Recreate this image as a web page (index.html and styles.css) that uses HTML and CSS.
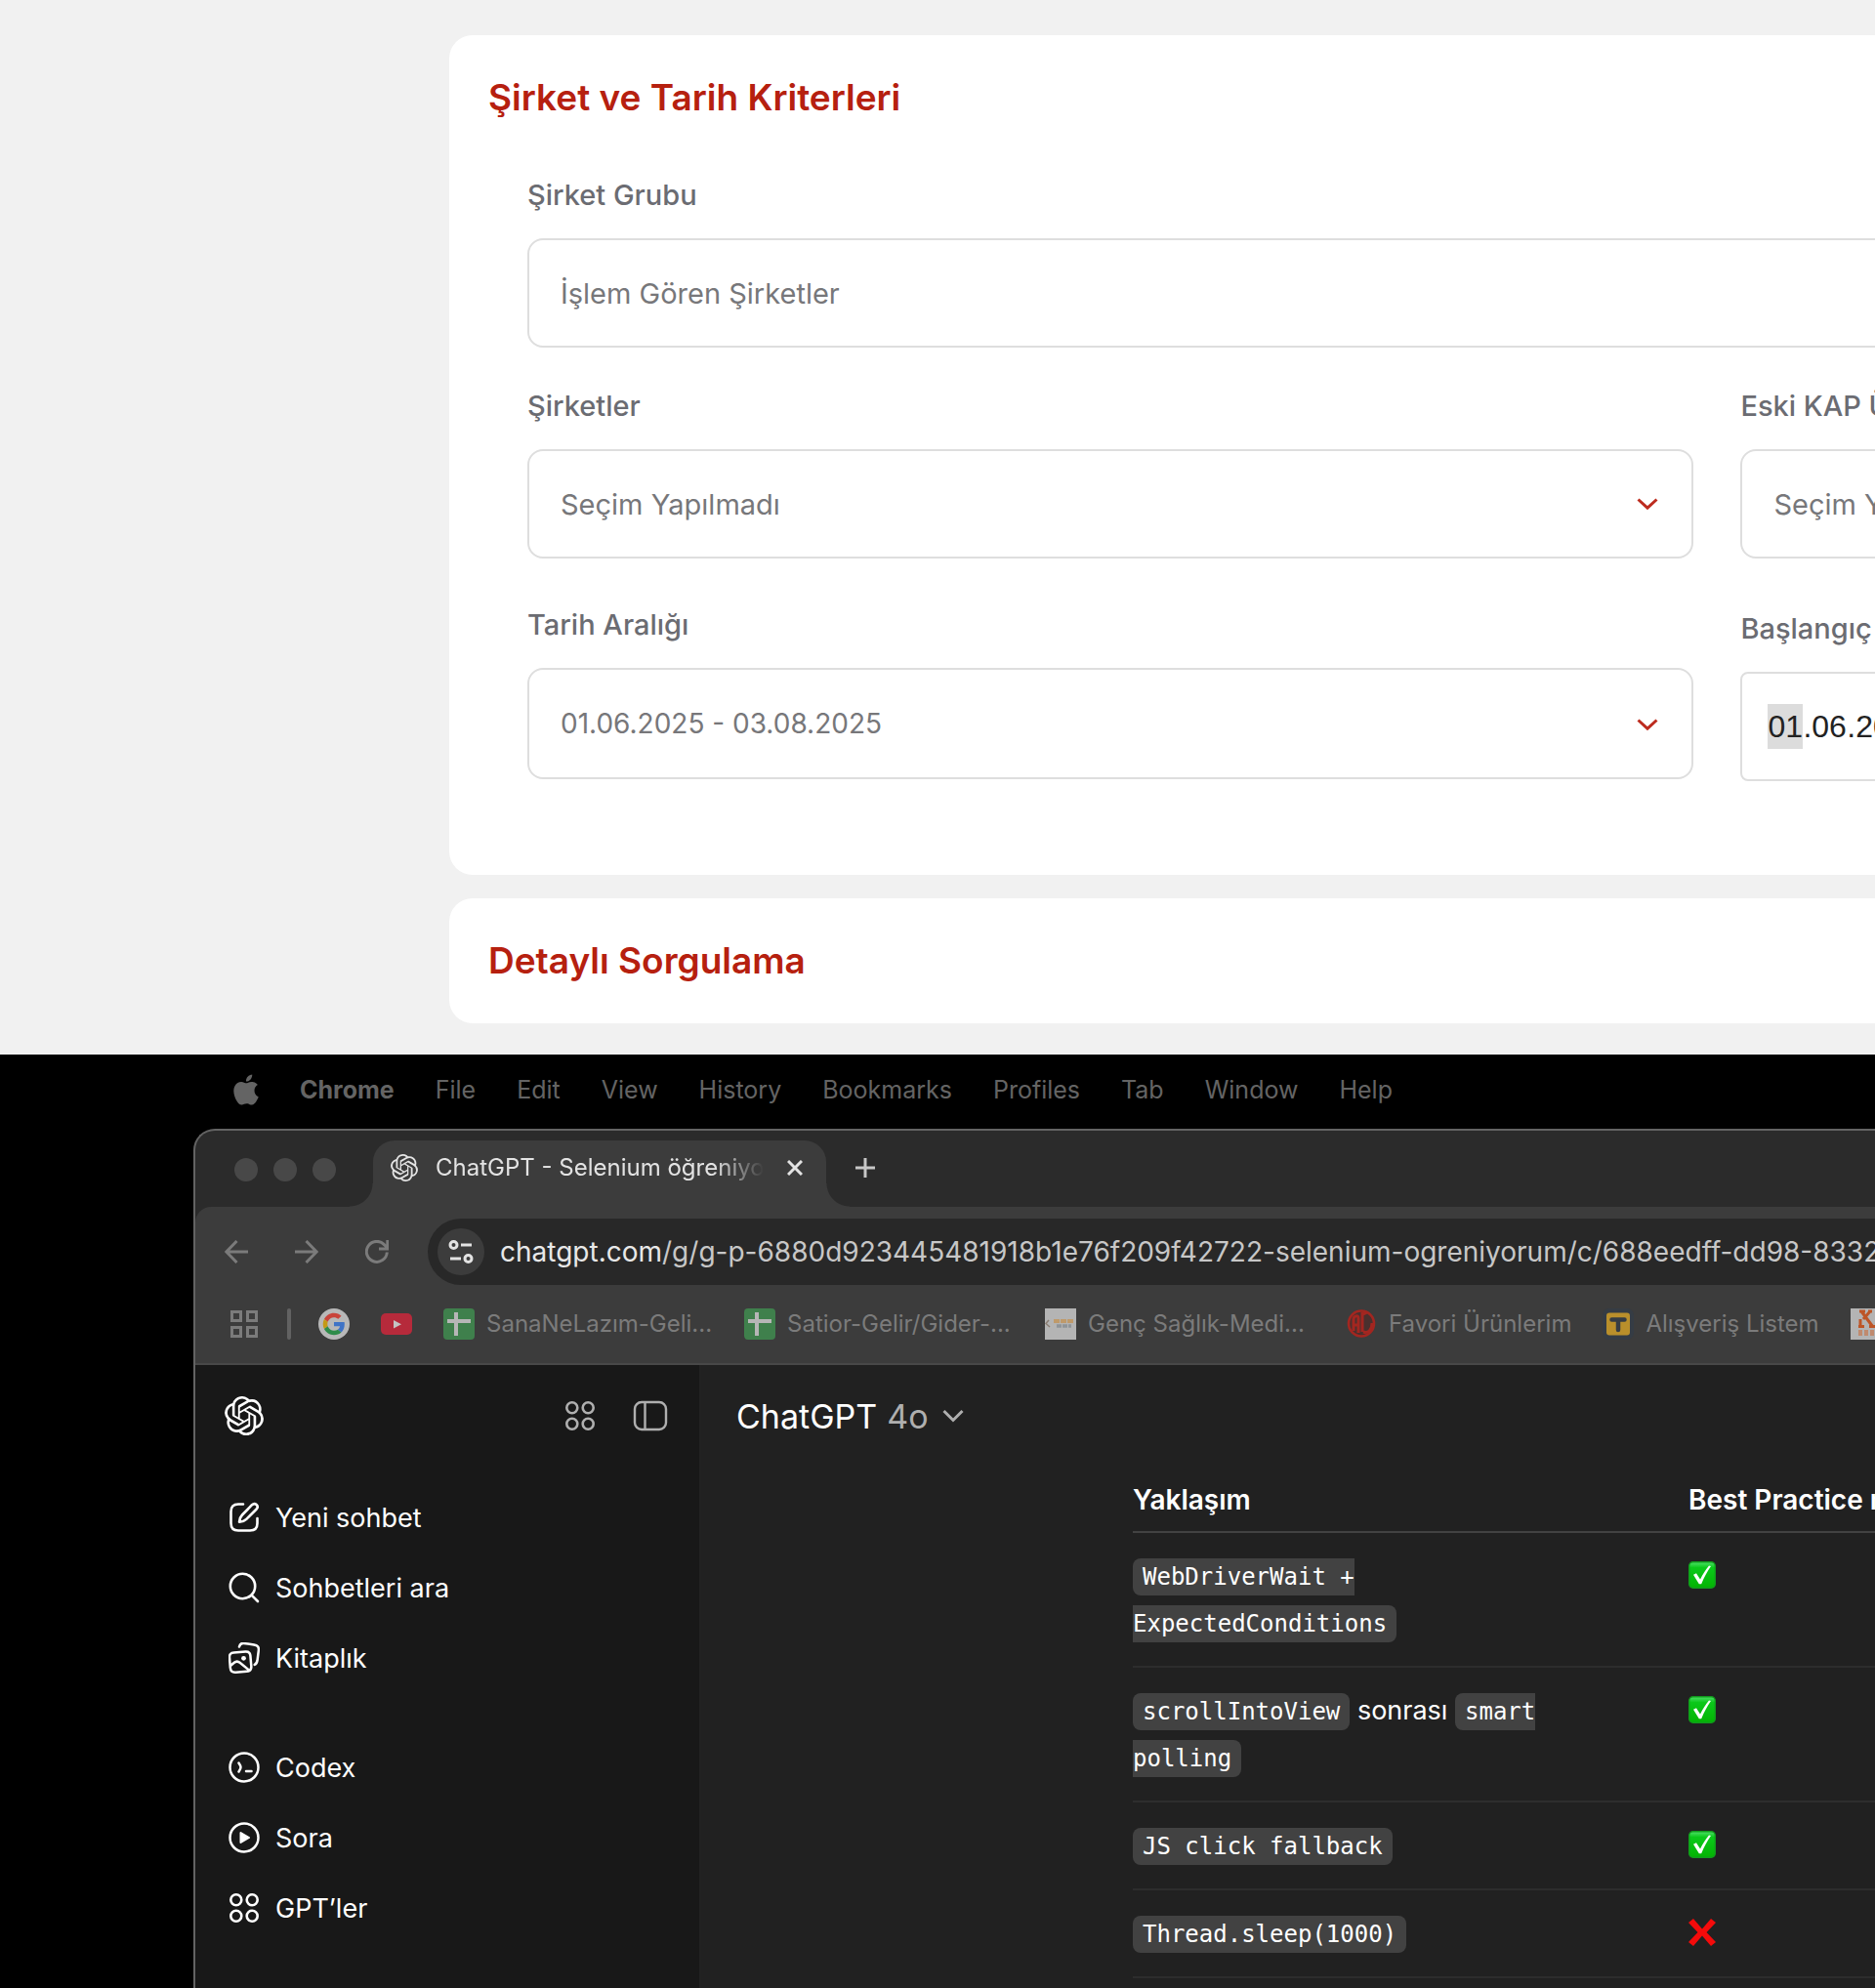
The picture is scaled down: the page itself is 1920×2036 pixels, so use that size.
FILE: index.html
```html
<!DOCTYPE html>
<html lang="tr">
<head>
<meta charset="utf-8">
<title>Şirket ve Tarih Kriterleri</title>
<link rel="stylesheet" href="styles.css">
</head>
<body>
<svg class="defs" aria-hidden="true">
  <symbol id="openai" viewBox="0 0 24 24"><path d="M22.2819 9.8211a5.9847 5.9847 0 0 0-.5157-4.9108 6.0462 6.0462 0 0 0-6.5098-2.9A6.0651 6.0651 0 0 0 4.9807 4.1818a5.9847 5.9847 0 0 0-3.9977 2.9 6.0462 6.0462 0 0 0 .7427 7.0966 5.98 5.98 0 0 0 .511 4.9107 6.051 6.051 0 0 0 6.5146 2.9001A5.9847 5.9847 0 0 0 13.2599 24a6.0557 6.0557 0 0 0 5.7718-4.2058 5.9894 5.9894 0 0 0 3.9977-2.9001 6.0557 6.0557 0 0 0-.7475-7.0729zm-9.022 12.6081a4.4755 4.4755 0 0 1-2.8764-1.0408l.1419-.0804 4.7783-2.7582a.7948.7948 0 0 0 .3927-.6813v-6.7369l2.02 1.1686a.071.071 0 0 1 .038.052v5.5826a4.504 4.504 0 0 1-4.4945 4.4944zm-9.6607-4.1254a4.4708 4.4708 0 0 1-.5346-3.0137l.142.0852 4.783 2.7582a.7712.7712 0 0 0 .7806 0l5.8428-3.3685v2.3324a.0804.0804 0 0 1-.0332.0615L9.74 19.9502a4.4992 4.4992 0 0 1-6.1408-1.6464zM2.3408 7.8956a4.485 4.485 0 0 1 2.3655-1.9728V11.6a.7664.7664 0 0 0 .3879.6765l5.8144 3.3543-2.0201 1.1685a.0757.0757 0 0 1-.071 0l-4.8303-2.7865A4.504 4.504 0 0 1 2.3408 7.872zm16.5963 3.8558L13.1038 8.364 15.1192 7.2a.0757.0757 0 0 1 .071 0l4.8303 2.7913a4.4944 4.4944 0 0 1-.6765 8.1042v-5.6772a.79.79 0 0 0-.407-.667zm2.0107-3.0231l-.142-.0852-4.7735-2.7818a.7759.7759 0 0 0-.7854 0L9.409 9.2297V6.8974a.0662.0662 0 0 1 .0284-.0615l4.8303-2.7866a4.4992 4.4992 0 0 1 6.6802 4.66zM8.3065 12.863l-2.02-1.1638a.0804.0804 0 0 1-.038-.0567V6.0742a4.4992 4.4992 0 0 1 7.3757-3.4537l-.142.0805L8.704 5.459a.7948.7948 0 0 0-.3927.6813zm1.0976-2.3654l2.602-1.4998 2.6069 1.4998v2.9994l-2.5974 1.4997-2.6067-1.4997Z" fill="currentColor"/></symbol>
  <symbol id="circles" viewBox="0 0 32 32"><g fill="none" stroke="currentColor" stroke-width="2.6"><circle cx="7.8" cy="7.8" r="5.5"/><circle cx="24.2" cy="7.8" r="5.5"/><circle cx="7.8" cy="24.2" r="5.5"/><circle cx="24.2" cy="24.2" r="5.5"/></g></symbol>
  <symbol id="sheet" viewBox="0 0 32 32"><rect width="32" height="32" rx="4" fill="#3f804c"/><path d="M4 11h24v4H4zM11 4h4v24h-4z" fill="#b6b6b6"/></symbol>
  <symbol id="check" viewBox="0 0 28 28"><linearGradient id="green" x1="0" y1="0" x2="0" y2="1"><stop offset="0" stop-color="#4fe06a"/><stop offset=".22" stop-color="#0bc81a"/><stop offset="1" stop-color="#03b303"/></linearGradient><rect x=".7" y=".7" width="26.600" height="26.600" rx="4" fill="url(#green)" stroke="#119c1c" stroke-width="1.400"/><path d="M5 13.800l3-1.600 4 6.300C14.500 13.500 17.500 8.800 21 4.600l2 .4c-4 5.600-7 11.400-9.800 18.200h-2.400z" fill="#fff"/></symbol>
  <symbol id="cross" viewBox="0 0 28 28"><path d="M5 0l9 10.500L23 0l5 4-9.500 10L28 24l-5 4-9-10.500L5 28l-5-4 9.500-10L0 4z" fill="#f40b0b"/></symbol>
</svg>

<section class="query">
  <form class="panels">
    <fieldset class="panel">
      <h2 class="panel-title">Şirket ve Tarih Kriterleri</h2>
      <div class="fields">
        <div class="field field-wide">
          <label for="group">Şirket Grubu</label>
          <select id="group" class="control"><option>İşlem Gören Şirketler</option></select>
        </div>
        <div class="field">
          <label for="companies">Şirketler</label>
          <div class="picker">
            <select id="companies" class="control"><option>Seçim Yapılmadı</option></select>
            <svg class="caret" viewBox="0 0 22 12"><path d="M1.500 1.500L11 10.200l9.500-8.700"/></svg>
          </div>
        </div>
        <div class="field">
          <label for="old-members">Eski KAP Üyeleri</label>
          <div class="picker">
            <select id="old-members" class="control"><option>Seçim Yapılmadı</option></select>
            <svg class="caret" viewBox="0 0 22 12"><path d="M1.500 1.500L11 10.200l9.500-8.700"/></svg>
          </div>
        </div>
        <div class="field field-range">
          <label for="range">Tarih Aralığı</label>
          <div class="picker">
            <select id="range" class="control control-range"><option>01.06.2025 - 03.08.2025</option></select>
            <svg class="caret" viewBox="0 0 22 12"><path d="M1.500 1.500L11 10.200l9.500-8.700"/></svg>
          </div>
        </div>
        <div class="field field-start">
          <label for="day">Başlangıç Tarihi</label>
          <div class="date-box">
            <input id="day" class="segment segment-active" value="01" aria-label="Gün"><span>.</span><input class="segment" value="06" aria-label="Ay"><span>.</span><input class="segment segment-year" value="2025" aria-label="Yıl">
          </div>
        </div>
      </div>
    </fieldset>
    <section class="panel panel-closed">
      <h2 class="panel-title">Detaylı Sorgulama</h2>
    </section>
  </form>
</section>

<section class="desktop">
  <nav class="menubar">
    <svg class="apple" viewBox="2 0 20 24"><path fill="currentColor" d="M12.152 6.896c-.948 0-2.415-1.078-3.96-1.04-2.04.027-3.91 1.183-4.961 3.014-2.117 3.675-.546 9.103 1.519 12.09 1.013 1.454 2.208 3.09 3.792 3.039 1.52-.065 2.09-.987 3.935-.987 1.831 0 2.35.987 3.96.948 1.637-.026 2.676-1.48 3.676-2.948 1.156-1.688 1.636-3.325 1.662-3.415-.039-.013-3.182-1.221-3.22-4.857-.026-3.04 2.48-4.494 2.597-4.559-1.429-2.09-3.623-2.324-4.39-2.376-2-.156-3.675 1.090-4.610 1.090zM15.530 3.830c.843-1.012 1.400-2.427 1.245-3.830-1.207.052-2.662.805-3.532 1.818-.78.896-1.454 2.338-1.273 3.714 1.338.104 2.715-.688 3.559-1.701"/></svg>
    <button class="menu menu-app">Chrome</button>
    <button class="menu">File</button>
    <button class="menu">Edit</button>
    <button class="menu">View</button>
    <button class="menu">History</button>
    <button class="menu">Bookmarks</button>
    <button class="menu">Profiles</button>
    <button class="menu">Tab</button>
    <button class="menu">Window</button>
    <button class="menu">Help</button>
  </nav>

  <div class="window">
    <header class="tabstrip">
      <div class="lights"><i></i><i></i><i></i></div>
      <div class="tab">
        <svg class="tab-icon"><use href="#openai"/></svg>
        <span class="tab-title">ChatGPT - Selenium öğreniyorum</span>
        <button class="tab-close" aria-label="Sekmeyi kapat"><svg viewBox="0 0 16 16"><path d="M1 1l14 14M15 1L1 15"/></svg></button>
      </div>
      <button class="tab-new" aria-label="Yeni sekme"><svg viewBox="0 0 20 20"><path d="M10 0v20M0 10h20"/></svg></button>
    </header>

    <div class="chrome">
      <div class="toolbar">
        <button class="nav" aria-label="Geri"><svg viewBox="0 0 24 24"><path d="M24 12H2M12.500 1L1.800 12l10.700 11"/></svg></button>
        <button class="nav" aria-label="İleri"><svg viewBox="0 0 24 24"><path d="M0 12h22M11.500 1l10.700 11-10.700 11"/></svg></button>
        <button class="nav" aria-label="Yenile"><svg viewBox="0 0 24 24"><path d="M22.300 12.500A10.500 10.500 0 1 1 20 5.300L23 8.500M22.800 0v9H14"/></svg></button>
        <div class="omnibox">
          <button class="site" aria-label="Site bilgileri"><svg viewBox="0 0 26 24"><g fill="none" stroke="currentColor" stroke-width="3"><circle cx="5.500" cy="5" r="3.500"/><path d="M13 5h11M2 19h11"/><circle cx="20.500" cy="19" r="3.500"/></g></svg></button>
          <span class="url"><b>chatgpt.com</b>/g/g-p-6880d923445481918b1e76f209f42722-selenium-ogreniyorum/c/688eedff-dd98-8332-b1d5</span>
        </div>
      </div>

      <nav class="bookmarks">
        <button class="apps" aria-label="Uygulamalar"><svg viewBox="0 0 28 28"><path d="M1.500 1.500h9v9h-9zM17.500 1.500h9v9h-9zM1.500 17.500h9v9h-9zM17.500 17.500h9v9h-9z"/></svg></button>
        <span class="rule"></span>
        <a class="mark" href="#" aria-label="Google"><svg viewBox="-10 -10 68 68"><circle cx="24" cy="24" r="34" fill="#b8b8b8"/><path fill="#c9443b" d="M24 9.500c3.540 0 6.710 1.220 9.210 3.600l6.850-6.850C35.900 2.380 30.470 0 24 0 14.620 0 6.510 5.380 2.560 13.220l7.980 6.190C12.430 13.720 17.740 9.500 24 9.500z"/><path fill="#3f73c6" d="M46.980 24.550c0-1.570-.15-3.090-.38-4.550H24v9.020h12.940c-.58 2.960-2.260 5.480-4.780 7.180l7.730 6c4.510-4.180 7.090-10.360 7.090-17.650z"/><path fill="#c49a16" d="M10.530 28.590c-.48-1.450-.76-2.990-.76-4.590s.27-3.140.76-4.590l-7.980-6.190C.92 16.460 0 20.120 0 24c0 3.880.92 7.540 2.560 10.780z"/><path fill="#2f8c4a" d="M24 48c6.480 0 11.930-2.130 15.890-5.810l-7.730-6c-2.150 1.450-4.920 2.300-8.160 2.300-6.260 0-11.570-4.220-13.470-9.910l-7.980 6.190C6.510 42.620 14.620 48 24 48z"/></svg></a>
        <a class="mark" href="#" aria-label="YouTube"><svg viewBox="0 0 32 32"><rect y="5" width="32" height="22" rx="5" fill="#b62a3b"/><path d="M13 12v8.500l8-4.200z" fill="#c4c4c4"/></svg></a>
        <a class="mark mark-cut" href="#"><svg><use href="#sheet"/></svg>SanaNeLazım-Geli...</a>
        <a class="mark mark-cut" href="#"><svg><use href="#sheet"/></svg>Satior-Gelir/Gider-...</a>
        <a class="mark mark-cut" href="#"><svg viewBox="0 0 32 32"><path fill="#b4b4b4" d="M0 0h32v32H0z"/><path d="M4 12l-3 3.500 4 3.500" fill="none" stroke="#8a7d72" stroke-width="1.500"/><path d="M9 13h21" stroke="#bf9a6a" stroke-width="4" stroke-dasharray="6 1"/><path d="M12 18h15" stroke="#8f9498" stroke-width="3.500" stroke-dasharray="5 1"/></svg>Genç Sağlık-Medi...</a>
        <a class="mark" href="#"><svg viewBox="0 0 32 32"><circle cx="16" cy="15.500" r="13" fill="#4a302e" stroke="#a32620" stroke-width="2.600"/><g fill="none" stroke="#a32620" stroke-width="3"><path d="M8 23V11c0-3 5-5 5-1v15M8 17h5M17 4v20M22 4l-4 2M18 24c5 2 9-2 9-9"/></g></svg>Favori Ürünlerim</a>
        <a class="mark" href="#"><svg viewBox="0 0 32 32"><rect width="32" height="32" rx="7" fill="#353c44"/><rect x="4" y="4.500" width="24" height="23" rx="3" fill="#b98f2b"/><path d="M9.500 11.500h13M16 12v10" stroke="#353c44" stroke-width="4.500" stroke-linecap="round"/></svg>Alışveriş Listem</a>
        <a class="mark" href="#" aria-label="K"><svg viewBox="0 0 32 32"><path fill="#b4b4b4" d="M0 0h32v32H0z"/><path d="M9 3h6M11 3l12 16M22 3h-4M20 3l-7 8M10 11v8M8 18.500h6M19 18.500h7" fill="none" stroke="#bd5526" stroke-width="3"/><path d="M8 25h21" stroke="#c08a6e" stroke-width="6" stroke-dasharray="4 2"/></svg></a>
      </nav>
    </div>

    <div class="app">
      <aside class="sidebar">
        <div class="side-head">
          <svg class="logo"><use href="#openai"/></svg>
          <button class="tool" aria-label="Uygulamalar"><svg><use href="#circles"/></svg></button>
          <button class="tool" aria-label="Kenar çubuğu"><svg viewBox="0 0 32 32"><g fill="none" stroke="currentColor" stroke-width="2.400"><rect x="0" y="2" width="32" height="28" rx="7"/><path d="M10.500 2v28"/></g></svg></button>
        </div>
        <nav class="links">
          <a href="#"><svg viewBox="0 0 32 32"><g fill="none" stroke="currentColor" stroke-width="2.600" stroke-linecap="round" stroke-linejoin="round"><path d="M15 2.500h-5c-5 0-7.500 2.500-7.500 7.500v12c0 5 2.500 7.500 7.500 7.500h12c5 0 7.500-2.500 7.500-7.500v-5"/><path d="M24 3.200L14 13.500c-2 2-2.800 4.500-3 7.300 2.800-.2 5.300-1 7.300-3L28.700 7.500c2.800-3.200-1.500-7.300-4.700-4.300z"/></g></svg>Yeni sohbet</a>
          <a href="#"><svg viewBox="0 0 32 32"><g fill="none" stroke="currentColor" stroke-width="2.600" stroke-linecap="round"><circle cx="14.500" cy="14.500" r="12.700"/><path d="M23.800 23.800l6.200 6.200"/></g></svg>Sohbetleri ara</a>
          <a href="#"><svg viewBox="0 0 32 32"><g fill="none" stroke="currentColor" stroke-width="2.500" stroke-linecap="round" stroke-linejoin="round"><path d="M11 4.500c.5-2.500 2-3.800 4.600-3.500l10.500 1.400c3.600.5 5.200 2.500 4.700 6l-1.200 9.600c-.3 2.400-1.100 4-2.900 4.900"/><path d="M5.400 10.500l12-1c3-.2 4.700 1.200 5 4.200l.9 10.600c.3 3.400-1.300 5.200-4.600 5.500l-11.300.9c-3.500.3-5.300-1.300-5.600-4.700L1 15.700c-.3-3.200 1.200-5 4.400-5.200zM2 24l3.800-3.200c1.800-1.500 4-1.500 5.800 0l9.600 7.800"/></g><circle cx="15.500" cy="16.300" r="2.400" fill="currentColor"/></svg>Kitaplık</a>
        </nav>
        <nav class="links">
          <a href="#"><svg viewBox="0 0 32 32"><g fill="none" stroke="currentColor" stroke-width="2.500" stroke-linecap="round" stroke-linejoin="round"><circle cx="16" cy="16" r="14.500"/><path d="M10.500 11.500c1 1.500 2 3 2 4.500s-1 3-2 4.500M18 20h5.500"/></g></svg>Codex</a>
          <a href="#"><svg viewBox="0 0 32 32"><circle cx="16" cy="16" r="14.500" fill="none" stroke="currentColor" stroke-width="2.500"/><path d="M12.500 11v10l8.500-5z" fill="currentColor" stroke="currentColor" stroke-width="2" stroke-linejoin="round"/></svg>Sora</a>
          <a href="#"><svg><use href="#circles"/></svg>GPT’ler</a>
        </nav>
      </aside>

      <main class="chat">
        <button class="model">ChatGPT <span>4o</span><svg viewBox="0 0 22 14"><path d="M1.500 2L11 11.500 20.500 2"/></svg></button>
        <table class="practices">
          <thead><tr><th>Yaklaşım</th><th>Best Practice mi?</th></tr></thead>
          <tbody>
            <tr><td><code>WebDriverWait +<br>ExpectedConditions</code></td><td><svg role="img" aria-label="Evet"><use href="#check"/></svg></td></tr>
            <tr><td><code>scrollIntoView</code> sonrası <code>smart<br>polling</code></td><td><svg role="img" aria-label="Evet"><use href="#check"/></svg></td></tr>
            <tr><td><code>JS click fallback</code></td><td><svg role="img" aria-label="Evet"><use href="#check"/></svg></td></tr>
            <tr><td><code>Thread.sleep(1000)</code></td><td><svg role="img" aria-label="Hayır"><use href="#cross"/></svg></td></tr>
          </tbody>
        </table>
      </main>
    </div>
  </div>
</section>
</body>
</html>
```
FILE: styles.css
```css
* { box-sizing: border-box; }

body {
  margin: 0;
  min-height: 100vh;
  display: flex;
  flex-direction: column;
  overflow: hidden;
  font-family: Inter, "Liberation Sans", sans-serif;
  background: #000;
}

button, input, select { font: inherit; color: inherit; }
button { padding: 0; border: 0; background: none; text-align: left; }
a { color: inherit; text-decoration: none; }
svg { display: block; flex: none; }
.defs { position: absolute; width: 0; height: 0; }

/* Query form */
.query { background: #f1f1f1; padding: 36px 0 32px 460px; overflow: hidden; }
.panels { width: 178%; display: flex; flex-direction: column; gap: 24px; }
.panel {
  margin: 0;
  min-width: 0;
  border: 0;
  border-radius: 24px;
  background: #fff;
  padding: 40px 82px 96px 80px;
}
.panel-closed { padding-bottom: 40px; }
.panel-title {
  margin: 0 0 0 -40px;
  font-size: 37px;
  font-weight: 600;
  line-height: 48px;
  color: #b6200f;
}
.fields {
  display: grid;
  grid-template-columns: 1fr 1fr;
  column-gap: 48px;
  padding-top: 56px;
}
.field { display: flex; flex-direction: column; gap: 24px; margin-bottom: 40px; }
.field-wide { grid-column: span 2; }
.field-range, .field-start { margin-bottom: 0; }
.field-range { padding-top: 8px; }
.field-start { padding-top: 12px; }
.field label { font-size: 29px; font-weight: 500; line-height: 40px; color: #6b6c72; }
.picker { position: relative; }
.control {
  display: block;
  width: 100%;
  height: 112px;
  padding: 0 32px;
  border: 2px solid #dedede;
  border-radius: 16px;
  background: #fff;
  appearance: none;
  font-size: 29px;
  color: #77777a;
  opacity: 1;
}
.control-range { height: 114px; font-size: 28px; }
.caret { position: absolute; right: 36px; top: 50px; width: 22px; height: 12px; fill: none; stroke: #bd2c1f; stroke-width: 3; }
.field-range .caret { top: 52px; }
.date-box {
  display: flex;
  align-items: center;
  height: 112px;
  padding: 0 26px;
  border: 2px solid #dedede;
  border-radius: 8px;
  font-family: "Liberation Sans", Arial, sans-serif;
  font-size: 32px;
  color: #222;
}
.segment { width: 36px; height: 46px; padding: 0; border: 0; background: none; }
.segment-active { background: #dcdcdc; }
.segment-year { width: 72px; }

/* Desktop */
.desktop { flex: 1; display: flex; flex-direction: column; background: #000; overflow: hidden; }
.menubar {
  display: flex;
  align-items: center;
  gap: 42px;
  height: 76px;
  padding: 0 0 4px 239px;
  font-size: 25px;
  color: #646464;
}
.apple { width: 26px; height: 32px; }
.menu-app { font-weight: 700; }

.window {
  flex: 1;
  display: flex;
  flex-direction: column;
  margin-left: 198px;
  border: 2px solid #636363;
  border-width: 2px 0 0 2px;
  border-top-left-radius: 22px;
  overflow: hidden;
  background: #2b2b2b;
}
.tabstrip { display: flex; align-items: center; height: 78px; padding: 10px 0 0 40px; }
.lights { display: flex; gap: 16px; width: 142px; height: 32px; }
.lights i { width: 24px; height: 24px; border-radius: 50%; background: #484848; }
.tab {
  position: relative;
  display: flex;
  align-items: center;
  width: 464px;
  height: 68px;
  padding: 0 24px 12px 18px;
  border-radius: 22px 22px 0 0;
  background: #3c3c3c;
  color: #e3e3e3;
}
.tab::before, .tab::after { content: ""; position: absolute; bottom: 0; width: 24px; height: 24px; }
.tab::before { left: -24px; background: radial-gradient(circle at 0 0, #2b2b2b 23px, #3c3c3c 24px); }
.tab::after { right: -24px; background: radial-gradient(circle at 100% 0, #2b2b2b 23px, #3c3c3c 24px); }
.tab-icon { width: 28px; height: 28px; margin-right: 18px; }
.tab-title {
  flex: 1;
  margin-right: 24px;
  overflow: hidden;
  white-space: nowrap;
  font-size: 24px;
  line-height: 32px;
  mask-image: linear-gradient(90deg, #000 85%, transparent);
}
.tab-close svg { width: 16px; height: 16px; }
.tab-new { margin: 0 0 12px 30px; color: #c7c7c7; }
.tab-new svg { width: 20px; height: 20px; }
.tab-close svg, .tab-new svg { fill: none; stroke: currentColor; stroke-width: 3; }

.chrome { background: #3c3c3c; border-top-left-radius: 16px; border-bottom: 2px solid #484848; }
.toolbar { display: flex; align-items: center; gap: 48px; height: 92px; padding-left: 30px; color: #7b7b7b; }
.nav svg { width: 24px; height: 24px; fill: none; stroke: currentColor; stroke-width: 3; }
.omnibox {
  flex: 1;
  display: flex;
  align-items: center;
  gap: 16px;
  min-width: 0;
  height: 68px;
  margin-left: -8px;
  padding-left: 10px;
  border-radius: 34px 0 0 34px;
  background: #282828;
  overflow: hidden;
}
.site { display: grid; place-items: center; flex: none; width: 48px; height: 48px; border-radius: 50%; background: #3c3c3c; color: #e3e3e3; }
.site svg { width: 26px; height: 24px; }
.url { white-space: nowrap; font-size: 28px; line-height: 36px; color: #c7c7c7; }
.url b { font-weight: 400; color: #e8e8e8; }

.bookmarks { display: flex; align-items: center; height: 68px; padding: 0 0 12px 36px; color: #7b7b7b; overflow: hidden; }
.apps svg { width: 28px; height: 28px; fill: none; stroke: currentColor; stroke-width: 3; }
.rule { flex: none; width: 4px; height: 32px; margin: 0 28px 0 30px; border-radius: 2px; background: #626262; }
.mark { flex: none; display: flex; align-items: center; gap: 12px; margin-right: 32px; font-size: 24px; line-height: 32px; white-space: nowrap; }
.mark svg { width: 32px; height: 32px; }
.mark-cut { width: 276px; }

.app { flex: 1; display: flex; background: #212121; color: #fff; }
.sidebar { flex: none; width: 518px; background: #181818; border-right: 2px solid #222; }
.side-head { display: flex; align-items: center; gap: 40px; height: 104px; padding: 0 34px 0 30px; color: #afafaf; }
.logo { width: 40px; height: 40px; margin-right: auto; color: #fff; }
.tool svg { width: 32px; height: 32px; overflow: visible; }
.links { display: flex; flex-direction: column; padding: 16px 0 0 34px; }
.links + .links { padding-top: 40px; }
.links a { display: flex; align-items: center; gap: 16px; height: 72px; font-size: 27px; }
.links svg { width: 32px; height: 32px; }

.chat { flex: 1; min-width: 0; overflow: hidden; }
.model { display: flex; align-items: center; gap: 10px; height: 104px; padding-left: 36px; font-size: 34px; }
.model span { color: #afafaf; }
.model svg { width: 22px; height: 14px; margin-left: 4px; fill: none; stroke: #afafaf; stroke-width: 3; }
.practices { width: 1280px; margin-left: 442px; border-collapse: separate; border-spacing: 0; table-layout: fixed; font-size: 27px; line-height: 48px; }
.practices th { padding: 10px 0 8px; text-align: left; font-size: 28px; font-weight: 600; border-bottom: 2px solid #424242; }
.practices th:first-child { width: 569px; }
.practices td { padding: 20px 0; vertical-align: top; border-bottom: 2px solid #2d2d2d; }
.practices svg { width: 28px; height: 28px; margin-top: 9px; }
.practices code { padding: 5px 10px; border-radius: 8px; background: #424242; font: 24px/24px "DejaVu Sans Mono", monospace; }
```
